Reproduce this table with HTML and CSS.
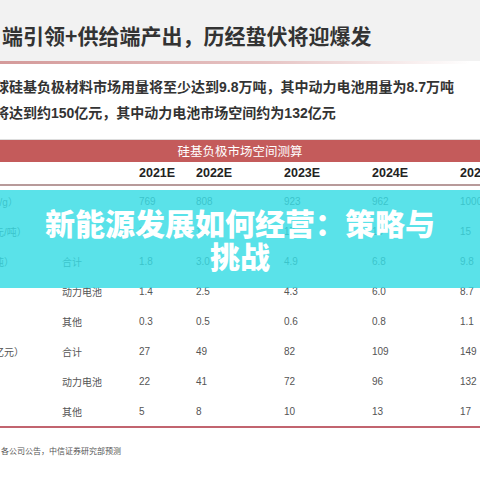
FILE: index.html
```html
<!DOCTYPE html>
<html lang="zh">
<head>
	<meta charset="UTF-8">
	<meta name="viewport" content="width=device-width, initial-scale=1.0">
	<title>新能源发展如何经营：策略与挑战</title>
	<link rel="stylesheet" href="styles.css">
</head>
<body>
	<div class="page">
		<div class="head">
			<h1 class="title">端引领+供给端产出，历经蛰伏将迎爆发</h1>
		</div>
		<div class="rule"></div>
		<div class="summary">
			<p class="cut">球硅基负极材料市场用量将至少达到9.8万吨，其中动力电池用量为8.7万吨</p>
			<p class="cut">将达到约150亿元，其中动力电池市场空间约为132亿元</p>
		</div>

		<div class="tbl">
			<div class="cap">硅基负极市场空间测算</div>
			<div class="row years">
				<span></span><span></span>
				<span>2021E</span><span>2022E</span><span>2023E</span><span>2024E</span><span>2025E</span>
			</div>
			<div class="body">
				<div class="row">
					<span class="lab">h/g）</span><span></span>
					<span>769</span><span>808</span><span>923</span><span>962</span><span>1000</span>
				</div>
				<div class="row">
					<span class="lab">元/吨）</span><span></span>
					<span>20</span><span>18</span><span>17</span><span>16</span><span>15</span>
				</div>
				<div class="row">
					<span class="lab">吨）</span><span>合计</span>
					<span>1.8</span><span>3.0</span><span>4.9</span><span>6.8</span><span>9.8</span>
				</div>
				<div class="row">
					<span class="lab"></span><span>动力电池</span>
					<span>1.4</span><span>2.5</span><span>4.3</span><span>6.0</span><span>8.7</span>
				</div>
				<div class="row">
					<span class="lab"></span><span>其他</span>
					<span>0.3</span><span>0.5</span><span>0.6</span><span>0.8</span><span>1.1</span>
				</div>
				<div class="row">
					<span class="lab">亿元）</span><span>合计</span>
					<span>27</span><span>49</span><span>82</span><span>109</span><span>149</span>
				</div>
				<div class="row">
					<span class="lab"></span><span>动力电池</span>
					<span>22</span><span>41</span><span>72</span><span>96</span><span>132</span>
				</div>
				<div class="row">
					<span class="lab"></span><span>其他</span>
					<span>5</span><span>8</span><span>10</span><span>13</span><span>17</span>
				</div>
			</div>
		</div>
		<p class="source">各公司公告，中信证券研究部预测</p>

		<div class="banner">新能源发展如何经营：策略与挑战</div>
	</div>
</body>
</html>
```

FILE: styles.css
```css
body{
	margin: 0;
	background: #fff;
	font-family: "Liberation Sans", "Noto Sans CJK SC", sans-serif;
}
.page{
	position: relative;
	width: 480px;
	height: 480px;
	overflow: hidden;
}
.head{
	height: 61px;
	padding-top: 9px;
	box-sizing: border-box;
	background: #f2f2f2;
	display: flex;
	align-items: center;
}
.title{
	margin: 0 0 0 2px;
	font-size: 21px;
	font-weight: bold;
	color: #333;
	white-space: nowrap;
	font-family: "Noto Sans CJK SC", sans-serif;
}
.rule{
	height: 3px;
	background: linear-gradient(to right, #d49a9a, #e6c3c3 55%, rgba(255,255,255,0) 98%);
}
.summary{
	padding-top: 10px;
}
.summary p{
	margin: 0;
	height: 26px;
	line-height: 26px;
	font-size: 14px;
	font-weight: bold;
	color: #333;
	white-space: nowrap;
}
.cut{
	margin-left: -5px !important;
}
.tbl{
	margin-top: 13px;
}
.cap{
	height: 22px;
	line-height: 22px;
	border-top: 1px solid #ddd;
	background: #c45b5b;
	color: #fff;
	font-size: 12.5px;
	text-align: center;
	font-family: "Noto Sans CJK SC", sans-serif;
}
.row{
	display: grid;
	grid-template-columns: 62px 77px 57px 88px 88px 88px 20px;
	height: 30px;
	align-items: center;
	font-size: 10px;
	color: #555;
	white-space: nowrap;
}
.years{
	height: 22px;
	font-size: 12.5px;
	font-weight: bold;
	color: #222;
	border-bottom: 2px solid #b89a9a;
}
.body{
	border-bottom: 2px solid #c2646f;
}
.lab{
	margin-left: -6px;
}
.source{
	margin: 18px 0 0 1px;
	font-size: 8px;
	line-height: 12px;
	color: #555;
}
.banner{
	position: absolute;
	left: 0;
	right: 0;
	top: 190px;
	height: 98px;
	padding: 0 40px;
	box-sizing: border-box;
	display: flex;
	align-items: center;
	justify-content: center;
	text-align: center;
	background: rgba(54, 220, 228, 0.82);
	color: #fff;
	font-size: 30px;
	line-height: 33px;
	font-weight: 900;
	font-family: "Noto Sans CJK SC", sans-serif;
}
```
